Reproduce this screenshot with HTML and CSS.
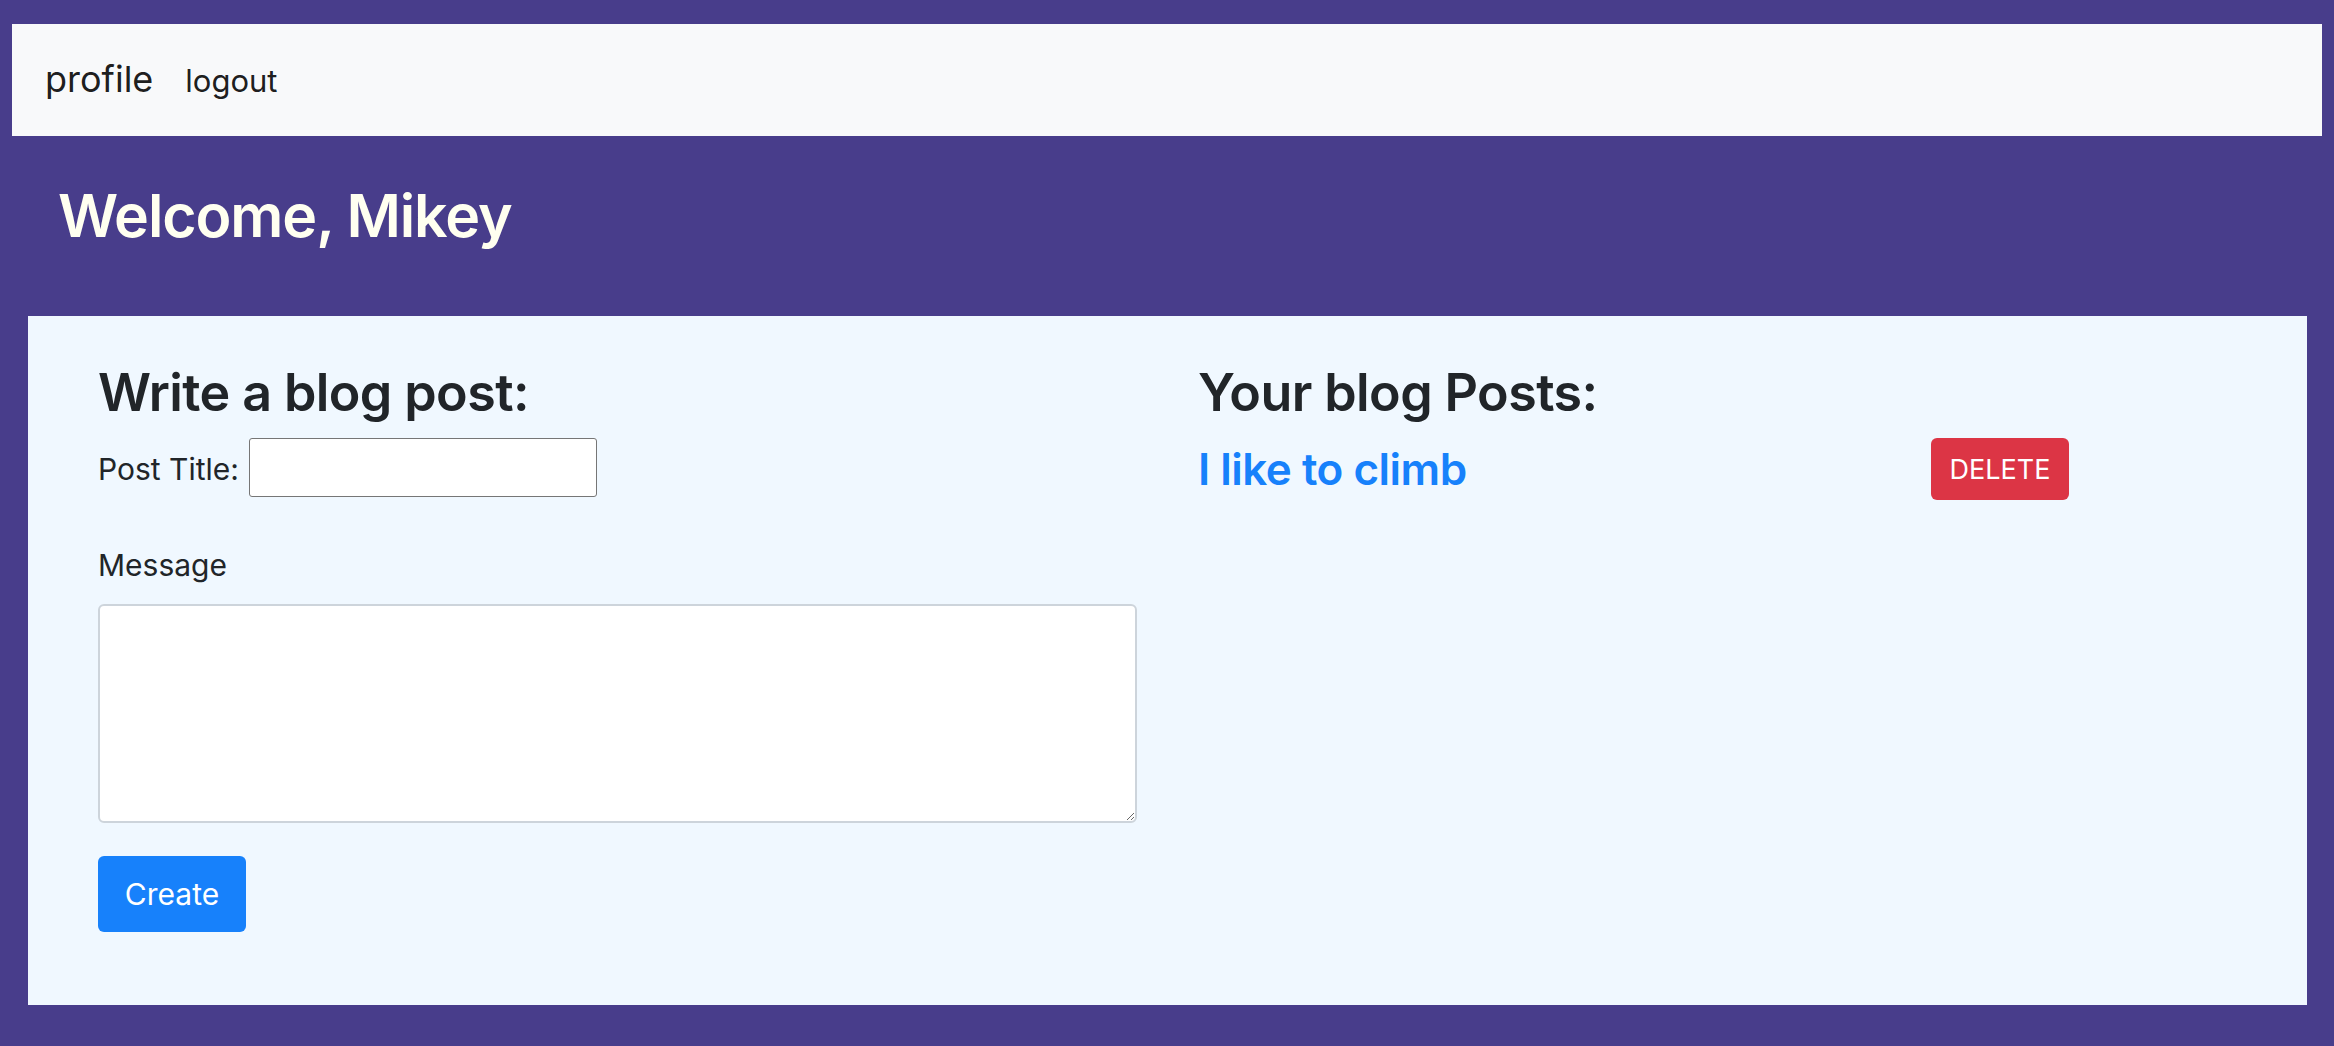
FILE: index.html
```html
<!DOCTYPE html>
<html lang="en">
<head>
<meta charset="utf-8">
<title>Profile</title>
<link rel="stylesheet" href="styles.css">
</head>
<body>
<nav class="navbar">
  <a class="brand" href="#">profile</a>
  <a class="nav-link" href="#">logout</a>
</nav>
<header class="welcome">
  <h1 class="welcome-title">Welcome, Mikey</h1>
</header>
<main class="panel">
  <section class="col">
    <h2 class="col-title">Write a blog post:</h2>
    <form class="post-form">
      <div class="title-row">
        <label class="label" for="title">Post Title:</label>
        <input class="title-input" id="title" type="text">
      </div>
      <label class="label message-label" for="message">Message</label>
      <textarea class="message" id="message"></textarea>
      <button class="btn btn-create" type="button">Create</button>
    </form>
  </section>
  <section class="col">
    <h2 class="col-title">Your blog Posts:</h2>
    <div class="post-row">
      <a class="post-link" href="#">I like to climb</a>
      <button class="btn btn-delete" type="button">DELETE</button>
    </div>
  </section>
</main>
</body>
</html>
```
FILE: styles.css
```css
* { box-sizing: border-box; }
html, body { margin: 0; padding: 0; }
body {
  background: #483d8b;
  font-family: Inter, "Liberation Sans", sans-serif;
  color: #212529;
  padding: 24px 12px 41px 12px;
  min-height: 1046px;
}
.navbar {
  background: #f8f9fa;
  height: 112px;
  display: flex;
  align-items: baseline;
  padding: 28px 33px 0 33px;
  gap: 32px;
}
.brand {
  font-size: 36px;
  line-height: 54px;
  color: rgba(0,0,0,0.9);
  text-decoration: none;
}
.nav-link {
  font-size: 31px;
  line-height: 46px;
  color: rgba(0,0,0,0.9);
  text-decoration: none;
}
.welcome {
  padding: 44px 0 0 46px;
  height: 180px;
}
.welcome-title {
  margin: 0;
  font-size: 59px;
  line-height: 72px;
  font-weight: 600;
  letter-spacing: -1.1px;
  color: #fffff0;
}
.panel {
  background: #f0f8ff;
  margin: 0 15px 0 16px;
  padding: 46px 70px 73px 70px;
  display: grid;
  grid-template-columns: 1040px 1040px;
  column-gap: 60px;
}
.col-title {
  margin: 0;
  font-size: 52px;
  line-height: 62.4px;
  font-weight: 600;
  letter-spacing: -0.6px;
}
.post-form { display: flex; flex-direction: column; align-items: flex-start; }
.title-row {
  display: flex;
  align-items: center;
  gap: 10px;
  margin-top: 13.6px;
}
.label { font-size: 30px; line-height: 45px; }
.title-row .label { position: relative; top: 2px; }
.title-input {
  width: 348px;
  height: 59px;
  border: 1.5px solid #767676;
  border-radius: 3px;
  background: #fff;
  font: inherit;
}
.message-label { margin-top: 45.6px; }
.message {
  margin-top: 16.4px;
  width: 1039px;
  height: 219px;
  border: 2px solid #cdd4db;
  border-radius: 6px;
  background: #fff;
  font: inherit;
  resize: vertical;
}
.btn {
  border: none;
  font-family: inherit;
  color: #fff;
  border-radius: 6px;
  cursor: pointer;
}
.btn-create {
  margin-top: 33px;
  width: 148px;
  height: 76px;
  font-size: 30px;
  background: #1781fb;
}
.post-row {
  display: grid;
  grid-template-columns: 733px auto;
  align-items: center;
  margin-top: 13.6px;
}
.post-link {
  color: #1781fb;
  font-size: 44px;
  font-weight: 600;
  letter-spacing: -0.5px;
  text-decoration: none;
}
.btn-delete {
  width: 138px;
  height: 62px;
  font-size: 27px;
  background: #dc3545;
}
```
